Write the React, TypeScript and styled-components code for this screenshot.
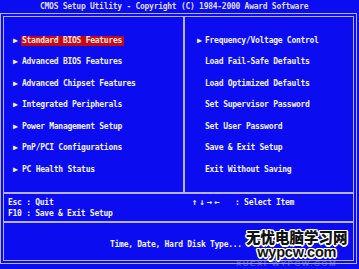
import React from 'react';
import styled, { createGlobalStyle } from 'styled-components';

const BLUE = '#0c0cf0';
const LINE = '#b4b4f4';
const TEXT = '#f2f2ff';

const GlobalStyle = createGlobalStyle`
    html, body {
        margin: 0;
        padding: 0;
        background: ${BLUE};
    }
`

const Screen = styled.div`
    position: relative;
    width: 359px;
    height: 269px;
    overflow: hidden;
    display: flex;
    flex-direction: column;
    background: ${BLUE};
    color: ${TEXT};
    font-family: "DejaVu Sans Mono", "Liberation Mono", monospace;
    font-weight: bold;
    font-size: 8px;
    letter-spacing: -0.27px;
    line-height: 10px;
`

const TitleBar = styled.div`
    height: 13px;
    display: flex;
    align-items: center;
    padding-left: 40px;
    color: #dcdcf0;
    white-space: pre;
`

const Frame = styled.div`
    width: 349px;
    height: 243px;
    border: 4px double ${LINE};
    display: flex;
    flex-direction: column;
`

const MenuArea = styled.div`
    height: 175px;
    display: grid;
    grid-template-columns: 179px 2px auto;
    border-bottom: 2px solid ${LINE};
`

const Divider = styled.div`
    background: ${LINE};
`

const Column = styled.div<{ $indent: number }>`
    display: flex;
    flex-direction: column;
    padding-top: 13px;
    padding-left: ${(p) => p.$indent}px;
`

const Row = styled.div`
    height: 21.5px;
    display: flex;
    align-items: center;
    white-space: pre;
`

const Arrow = styled.span<{ $width: number }>`
    width: ${(p) => p.$width}px;
    font-size: 8px;
    letter-spacing: 0;
`

const Label = styled.span<{ $active?: boolean }>`
    margin-left: -1.5px;
    padding: 0 1.5px;
    height: 10px;
    background: ${(p) => (p.$active ? '#c80810' : 'transparent')};
    color: ${(p) => (p.$active ? '#ffe8e8' : TEXT)};
`

const KeysArea = styled.div`
    height: 29px;
    display: grid;
    grid-template-columns: 184px auto;
    align-content: start;
    padding-top: 3px;
    box-sizing: border-box;
    border-bottom: 2px solid ${LINE};
`

const KeyCol = styled.div<{ $indent: number }>`
    display: flex;
    flex-direction: column;
    padding-left: ${(p) => p.$indent}px;
    line-height: 11px;
    white-space: pre;
`

const KeyArrows = styled.span`
    display: inline-block;
    width: 43px;
    letter-spacing: 2px;
    font-size: 9px;
`

const HelpArea = styled.div`
    flex: 1;
    display: flex;
    align-items: center;
    padding-left: 106px;
    padding-top: 6px;
    white-space: pre;
`

const Watermark = styled.div`
    position: absolute;
    left: 246px;
    top: 229px;
    display: flex;
    flex-direction: column;
    align-items: center;
    font-family: "Noto Sans CJK SC", "Noto Sans", sans-serif;
    font-weight: 900;
    color: #111;
    letter-spacing: 0;
    text-shadow: -1px -1px 0 #fff, 1px -1px 0 #fff, -1px 1px 0 #fff, 1px 1px 0 #fff, 0 1.5px 0 #fff, 1.5px 0 0 #fff, -1.5px 0 0 #fff, 0 -1.5px 0 #fff;
`

const MarkCn = styled.span`
    font-size: 14.5px;
    line-height: 15px;
`

const MarkUrl = styled.span`
    margin-top: 2px;
    font-family: "Liberation Sans", Arial, sans-serif;
    font-size: 14.5px;
    line-height: 12px;
    letter-spacing: -0.2px;
`

const MarkFaint = styled.span`
    position: absolute;
    left: -10px;
    top: 31px;
    font-family: "Liberation Sans", Arial, sans-serif;
    font-size: 8px;
    line-height: 8px;
    color: rgba(150, 160, 255, 0.5);
    text-shadow: none;
    letter-spacing: 1.5px;
    white-space: pre;
`

const leftItems = [
    'Standard BIOS Features',
    'Advanced BIOS Features',
    'Advanced Chipset Features',
    'Integrated Peripherals',
    'Power Management Setup',
    'PnP/PCI Configurations',
    'PC Health Status',
]

const rightItems = [
    { label: 'Frequency/Voltage Control', arrow: true },
    { label: 'Load Fail-Safe Defaults', arrow: false },
    { label: 'Load Optimized Defaults', arrow: false },
    { label: 'Set Supervisor Password', arrow: false },
    { label: 'Set User Password', arrow: false },
    { label: 'Save & Exit Setup', arrow: false },
    { label: 'Exit Without Saving', arrow: false },
]

const App: React.FC = () => {
    return (
        <>
            <GlobalStyle />
            <Screen>
                <TitleBar>CMOS Setup Utility - Copyright (C) 1984-2000 Award Software</TitleBar>
                <Frame>
                    <MenuArea>
                        <Column $indent={9}>
                            {leftItems.map((item, i) => (
                                <Row key={item}>
                                    <Arrow $width={9}>▶</Arrow>
                                    <Label $active={i === 0}>{item}</Label>
                                </Row>
                            ))}
                        </Column>
                        <Divider />
                        <Column $indent={12}>
                            {rightItems.map((item) => (
                                <Row key={item.label}>
                                    <Arrow $width={8}>{item.arrow ? '▶' : ''}</Arrow>
                                    <Label>{item.label}</Label>
                                </Row>
                            ))}
                        </Column>
                    </MenuArea>
                    <KeysArea>
                        <KeyCol $indent={4}>
                            <span>Esc : Quit</span>
                            <span>F10 : Save &amp; Exit Setup</span>
                        </KeyCol>
                        <KeyCol $indent={4}>
                            <span><KeyArrows>↑↓→←</KeyArrows>: Select Item</span>
                        </KeyCol>
                    </KeysArea>
                    <HelpArea>Time, Date, Hard Disk Type...</HelpArea>
                </Frame>
                <Watermark>
                    <MarkFaint>XUEXI·WYPCW.COM</MarkFaint>
                    <MarkCn>无忧电脑学习网</MarkCn>
                    <MarkUrl>wypcw.com</MarkUrl>
                </Watermark>
            </Screen>
        </>
    )
}

export default App;
